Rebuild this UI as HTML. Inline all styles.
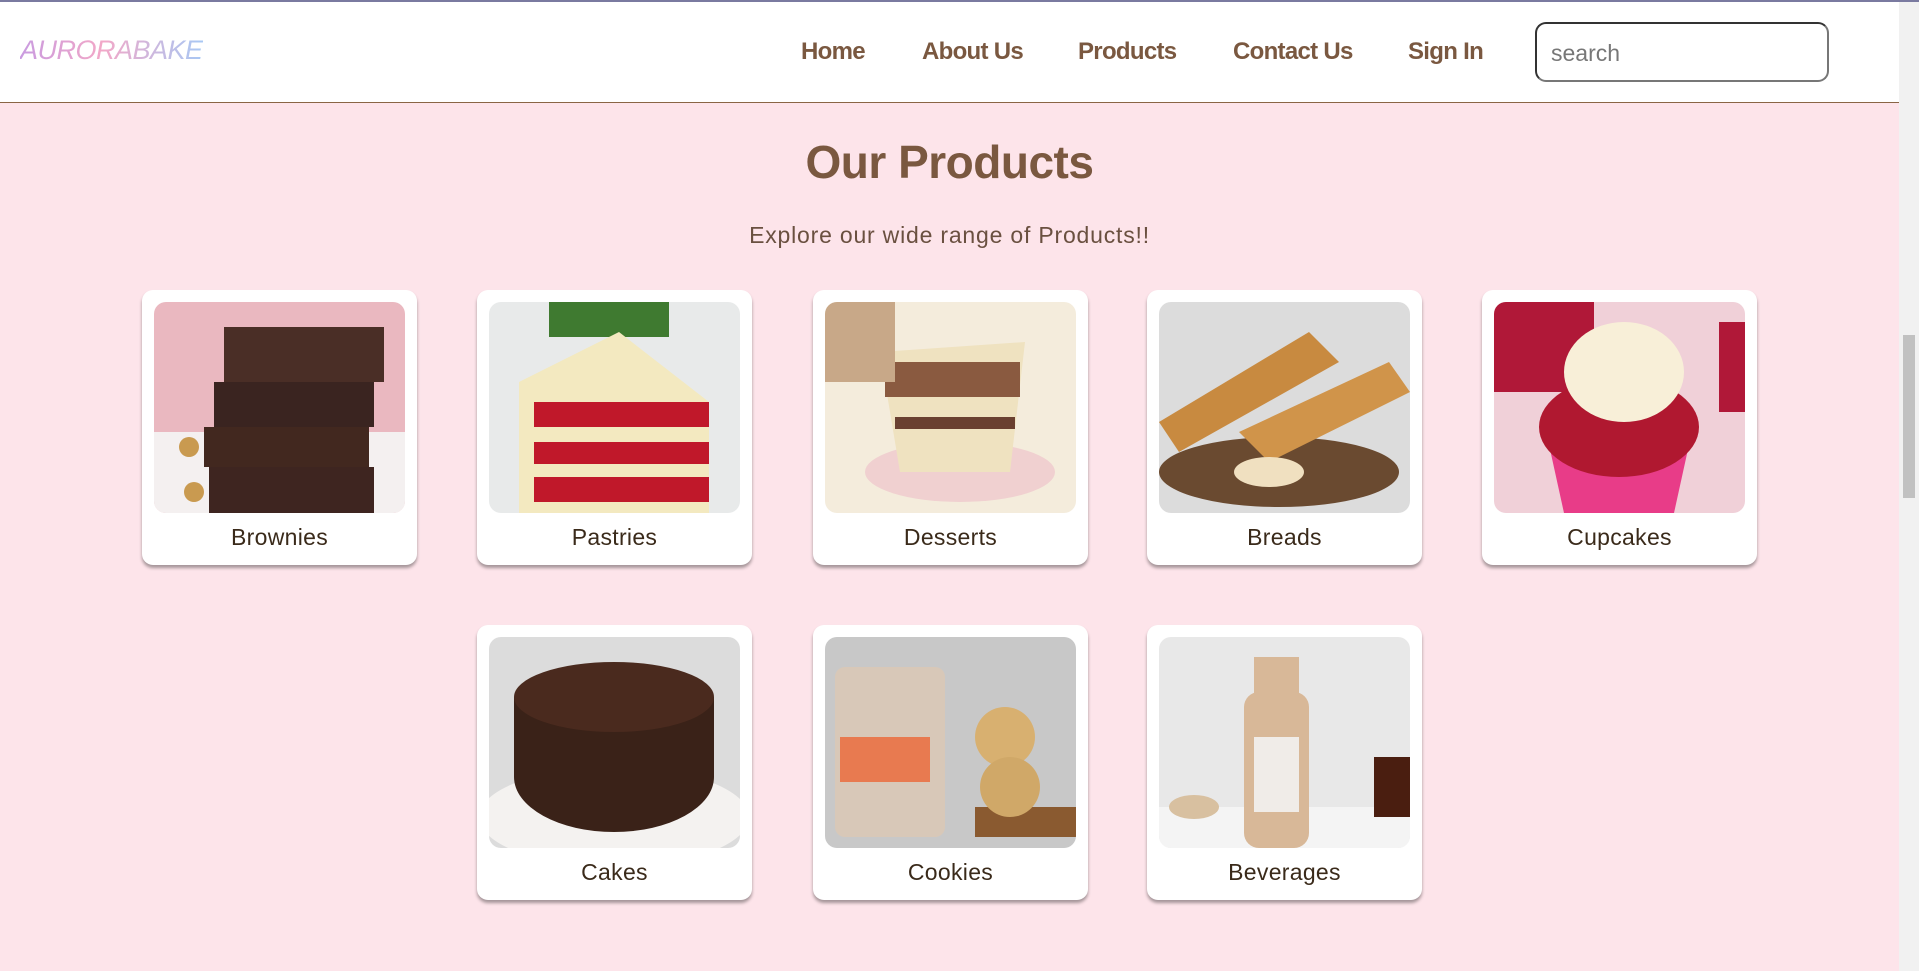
<!DOCTYPE html>
<html><head><meta charset="utf-8">
<style>
*{margin:0;padding:0;box-sizing:border-box}
html,body{width:1919px;height:971px;overflow:hidden}
body{background:#fde4ea;font-family:"Liberation Sans",sans-serif;position:relative;border-top:2px solid #7a7aa0}
.hdr{position:absolute;left:0;top:0;width:1899px;height:101px;background:#fff;border-bottom:1px solid #8a6545}
.logo{position:absolute;left:20px;top:33px;font-size:27px;font-style:italic;letter-spacing:-0.5px;background:linear-gradient(90deg,#c99be0,#f2a8c8 45%,#a8c8f4);-webkit-background-clip:text;color:transparent}
.nav a{position:absolute;top:36px;font-size:24px;font-weight:bold;color:#7a5840;text-decoration:none;letter-spacing:-0.7px}
.search{position:absolute;left:1535px;top:20px;width:294px;height:60px;border:2px solid #333;border-bottom-color:#777;border-right-color:#777;border-radius:11px;font-size:23px;color:#777;padding:16px 0 0 14px}
.sb{position:absolute;left:1899px;top:0;width:20px;height:971px;background:#f1f1f1}
.thumb{position:absolute;left:1903px;top:333px;width:12px;height:163px;background:#c1c1c1}
h1{position:absolute;left:0;width:1899px;top:133px;text-align:center;font-size:46px;color:#7a5840;letter-spacing:-0.5px}
.sub{position:absolute;left:0;width:1899px;top:220px;text-align:center;font-size:23px;color:#6a5040;letter-spacing:0.8px}
.card{position:absolute;width:275px;height:275px;background:#fff;border-radius:11px;box-shadow:0 3px 3px rgba(0,0,0,.35)}
.card svg{position:absolute;left:12px;top:12px;width:251px;height:211px;border-radius:12px;overflow:hidden}
.card span{position:absolute;left:0;right:0;top:234px;text-align:center;font-size:23px;color:#3a2a1a;letter-spacing:0.3px}
</style></head><body>
<div class="hdr">
<div class="logo">AURORABAKE</div>
<div class="nav"><a style="left:801px">Home</a><a style="left:922px">About Us</a><a style="left:1078px">Products</a><a style="left:1233px">Contact Us</a><a style="left:1408px">Sign In</a></div>
<div class="search">search</div>
</div>
<div class="sb"></div><div class="thumb"></div>
<h1>Our Products</h1>
<div class="sub">Explore our wide range of Products!!</div>

<div class="card" style="left:142px;top:288px"><svg viewBox="0 0 251 211"><rect width="251" height="211" fill="#eab8c0"/><rect y="130" width="251" height="81" fill="#f4f0f0"/><rect x="70" y="25" width="160" height="55" fill="#4a2e26"/><rect x="60" y="80" width="160" height="45" fill="#3a2420"/><rect x="50" y="125" width="165" height="40" fill="#42281f"/><rect x="55" y="165" width="165" height="46" fill="#3e2520"/><circle cx="35" cy="145" r="10" fill="#c99a50"/><circle cx="40" cy="190" r="10" fill="#c99a50"/></svg><span>Brownies</span></div>
<div class="card" style="left:477px;top:288px"><svg viewBox="0 0 251 211"><rect width="251" height="211" fill="#e8eaea"/><rect x="60" y="0" width="120" height="35" fill="#3f7a30"/><polygon points="30,80 130,30 220,100 220,211 30,211" fill="#f3e9c0"/><rect x="45" y="100" width="175" height="25" fill="#c0182a"/><rect x="45" y="140" width="175" height="22" fill="#c0182a"/><rect x="45" y="175" width="175" height="25" fill="#c0182a"/></svg><span>Pastries</span></div>
<div class="card" style="left:813px;top:288px"><svg viewBox="0 0 251 211"><rect width="251" height="211" fill="#f4ecdc"/><ellipse cx="135" cy="170" rx="95" ry="30" fill="#f0d0d0"/><polygon points="55,50 200,40 185,170 75,170" fill="#efe2c0"/><rect x="60" y="60" width="135" height="35" fill="#8a5a40"/><rect x="70" y="115" width="120" height="12" fill="#6a4030"/><rect x="0" y="0" width="70" height="80" fill="#c8a888"/></svg><span>Desserts</span></div>
<div class="card" style="left:1147px;top:288px"><svg viewBox="0 0 251 211"><rect width="251" height="211" fill="#dcdcdc"/><ellipse cx="120" cy="170" rx="120" ry="35" fill="#6a4a30"/><polygon points="0,120 150,30 180,60 20,150" fill="#c88a40"/><polygon points="80,130 230,60 251,90 110,160" fill="#d0944a"/><ellipse cx="110" cy="170" rx="35" ry="15" fill="#f0e0c0"/></svg><span>Breads</span></div>
<div class="card" style="left:1482px;top:288px"><svg viewBox="0 0 251 211"><rect width="251" height="211" fill="#f0d0d8"/><rect x="0" y="0" width="100" height="90" fill="#b01838"/><polygon points="50,120 200,120 180,211 70,211" fill="#e83c88"/><ellipse cx="125" cy="125" rx="80" ry="50" fill="#b01830"/><ellipse cx="130" cy="70" rx="60" ry="50" fill="#f8efd8"/><rect x="225" y="20" width="26" height="90" fill="#b01838"/></svg><span>Cupcakes</span></div>

<div class="card" style="left:477px;top:623px"><svg viewBox="0 0 251 211"><rect width="251" height="211" fill="#dcdcdc"/><ellipse cx="125" cy="180" rx="135" ry="50" fill="#f4f2f0"/><ellipse cx="125" cy="140" rx="100" ry="55" fill="#3a2218"/><rect x="25" y="60" width="200" height="80" fill="#3a2218"/><ellipse cx="125" cy="60" rx="100" ry="35" fill="#4a2a1e"/></svg><span>Cakes</span></div>
<div class="card" style="left:813px;top:623px"><svg viewBox="0 0 251 211"><rect width="251" height="211" fill="#c8c8c8"/><rect x="10" y="30" width="110" height="170" rx="10" fill="#d8c8b8"/><rect x="15" y="100" width="90" height="45" fill="#e87a50"/><rect x="150" y="170" width="101" height="30" fill="#8a5a30"/><circle cx="180" cy="100" r="30" fill="#d8b070"/><circle cx="185" cy="150" r="30" fill="#d0a868"/></svg><span>Cookies</span></div>
<div class="card" style="left:1147px;top:623px"><svg viewBox="0 0 251 211"><rect width="251" height="211" fill="#e8e8e8"/><rect y="170" width="251" height="41" fill="#f4f4f4"/><rect x="95" y="20" width="45" height="40" fill="#d8b898"/><rect x="85" y="55" width="65" height="156" rx="15" fill="#d8b898"/><rect x="95" y="100" width="45" height="75" fill="#f0ece8"/><rect x="215" y="120" width="36" height="60" fill="#4a1e10"/><ellipse cx="35" cy="170" rx="25" ry="12" fill="#d8c0a0"/></svg><span>Beverages</span></div>
</body></html>
